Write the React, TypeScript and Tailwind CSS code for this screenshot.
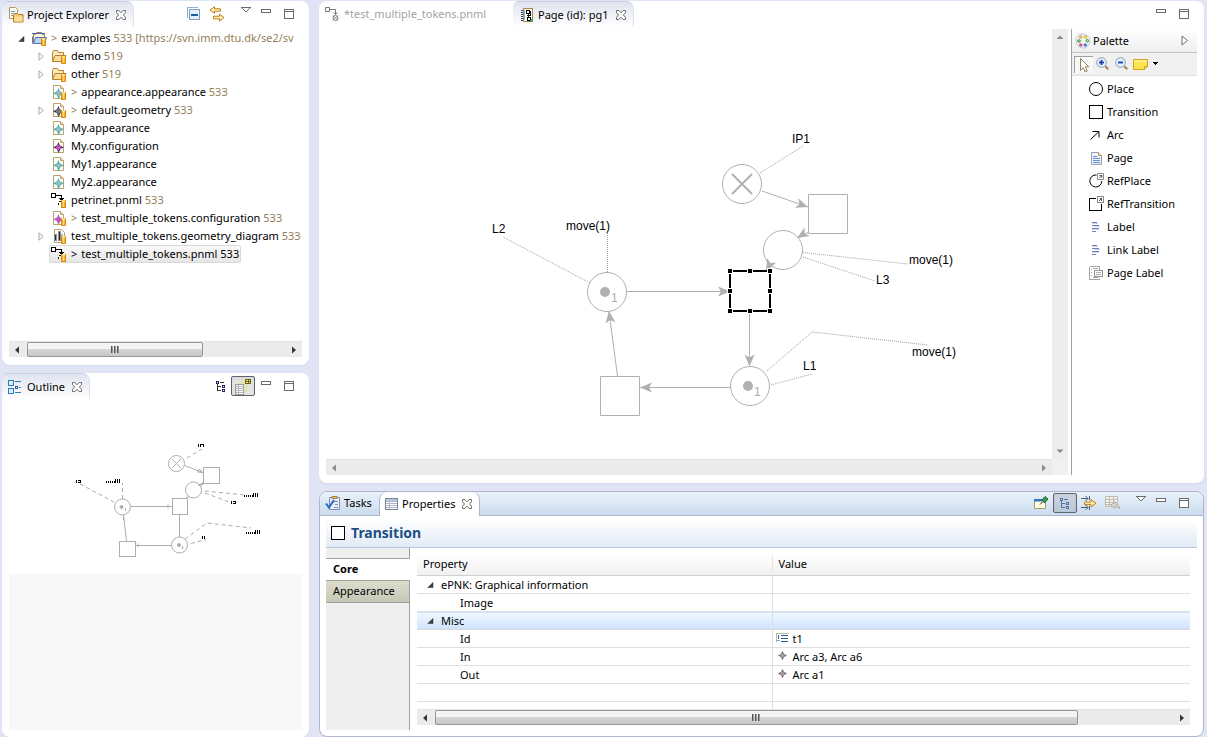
import React from "react";

type IconProps = { children: React.ReactNode; w?: number; h?: number; smooth?: boolean };

function Icon({ children, w = 16, h = 16, smooth = false }: IconProps) {
  return (
    <svg
      width={w}
      height={h}
      viewBox={`0 0 ${w} ${h}`}
      fill="none"
      shapeRendering={smooth ? "auto" : "crispEdges"}
      className="block shrink-0"
      aria-hidden="true"
    >
      {children}
    </svg>
  );
}

/* ---------- window chrome icons ---------- */

const CloseIcon = () => (
  <Icon w={12} h={12} smooth>
    <path
      d="M1.5 1.5h2.4L6 3.8l2.1-2.3h2.4v2.2L8.4 6l2.1 2.3v2.2H8.1L6 8.2l-2.1 2.3H1.5V8.3L3.6 6 1.5 3.7z"
      stroke="#6c6c6c"
      fill="#fff"
    />
  </Icon>
);

const MenuIcon = () => (
  <Icon w={10} h={16}>
    <path d="M0 1h10v1H0zM1 2h1v1H1zM8 2h1v1H8zM2 3h1v1H2zM7 3h1v1H7zM3 4h1v1H3zM6 4h1v1H6zM4 5h2v1H4z" fill="#6b6b6b" />
    <path d="M2 2h6v1H2zM3 3h4v1H3zM4 4h2v1H4z" fill="#fff" />
  </Icon>
);

const MinimizeIcon = () => (
  <Icon w={10} h={16}>
    <path d="M.5 3.5h9v3h-9z" stroke="#6b6b6b" fill="#fff" />
  </Icon>
);

const MaximizeIcon = () => (
  <Icon w={10} h={16}>
    <path d="M.5 3.5h9v9h-9z" stroke="#6b6b6b" fill="#fff" />
    <path d="M0 5h10v1H0z" fill="#6b6b6b" />
  </Icon>
);

/* ---------- explorer icons ---------- */

const ExplorerIcon = () => (
  <Icon smooth>
    <path d="M1.5.5h6l2 2v9h-8z" fill="#fffdf3" stroke="#b39a5a" />
    <path d="M3 4.5h4M3 6.5h2.5M3 8.5h2" stroke="#6f9bc9" />
    <path d="M5.500 8.500l1-2h3l1 1h4.500v7.500h-9.500z" fill="#f5c86e" stroke="#b5792a" />
    <path d="M6.500 9.500h8v5h-8z" fill="#fbdc93" />
  </Icon>
);

const CollapseIcon = () => (
  <Icon w={14} h={14}>
    <path d="M.5 10.500v-10h10" stroke="#8fb0d0" />
    <path d="M2.500 2.500h10v10h-10z" fill="#e4f0fa" stroke="#7c9fc2" />
    <path d="M4 7h7v2H4z" fill="#1d5c9b" />
  </Icon>
);

const LinkIcon = () => (
  <Icon smooth>
    <path d="M5.500.8v2h6v2.400h-6v2L1 4z" fill="#fff0b8" stroke="#b8811f" />
    <path d="M10.500 8.200v2h-6v2.600h6v2.300L15 11.600z" fill="#fff0b8" stroke="#b8811f" />
  </Icon>
);

const Cylinder = () => (
  <>
    <path d="M10.500 8.500h4v7h-4z" fill="#f7b42c" stroke="#d58a12" />
    <path d="M11 8h3v2h-3z" fill="#fde08a" />
    <path d="M12 10h1v5h-1z" fill="#ffd873" />
  </>
);

const ProjectIcon = () => (
  <Icon smooth>
    <path d="M2.500 13.500v-9h2l1-2h5l1 2h2v3" fill="#fdf6dd" stroke="#9c8a5a" />
    <path d="M1 3.500h13" stroke="#4a62b0" />
    <path d="M1.500 6.500v7" stroke="#5b76bd" />
    <path d="M2.500 13.500l2-6h11l-2 6z" fill="#b9d3f4" stroke="#5673b8" />
    <Cylinder />
  </Icon>
);

const FolderIcon = () => (
  <Icon smooth>
    <path d="M1.500 13.500v-9l1-2h4l1 2h5v3" fill="#fbe8bd" stroke="#b9822f" />
    <path d="M1.500 13.500l2.500-6h11l-2.500 6z" fill="#fbdb9a" stroke="#b9822f" />
    <Cylinder />
  </Icon>
);

type FileProps = { tone: string; line: string; versioned?: boolean };

const FileIcon = ({ tone, line, versioned }: FileProps) => (
  <Icon smooth>
    <path d="M2.500 1.500h7l3 3v10h-10z" fill="#fcfdff" stroke="#b9a36b" />
    <path d="M9.500 1.500v3h3" fill="#efdca2" stroke="#b9a36b" />
    <path d="M7.500 4l1.300 3.200L13 9.500l-3.200 1.300L7.500 15l-1.700-4L2 9.500l4-2.300z" fill={line} />
    <path d="M7.500 6.500l3 3-3 3-3-3z" fill={tone} />
    {versioned && <Cylinder />}
  </Icon>
);

const AppearanceFile = ({ versioned = false }) => <FileIcon tone="#a4b5b4" line="#35b9b6" versioned={versioned} />;
const ConfigFile = ({ versioned = false }) => (
  <FileIcon tone="#d04fc8" line={versioned ? "#a387ab" : "#4a3b50"} versioned={versioned} />
);
const GeometryFile = () => <FileIcon tone="#7b7b80" line="#3a3a3e" versioned />;

const PnmlIcon = () => (
  <Icon>
    <path d="M.5 1.500h4v4h-4z" stroke="#000" fill="#fff" />
    <path d="M5 3h5v1H5zM10 3h1v5h-1zM8 6h5v1H8zM9 7h3v1H9zM10 8h1v1h-1z" fill="#000" />
    <path d="M8 9h2v1H8zM7 11h1v2H7z" fill="#222" />
    <Cylinder />
  </Icon>
);

const PnmlGrayIcon = () => (
  <Icon smooth>
    <path d="M.5 1.500h4v4h-4z" stroke="#777" />
    <path d="M5 3.500h5.500V8M8.500 6.500l2 2 2-2" stroke="#777" />
    <path d="M8 9.500l5 5M13 9.500l-5 5" stroke="#999" />
    <circle cx="10.500" cy="12" r="2.500" stroke="#777" />
  </Icon>
);

const DiagramFile = () => (
  <Icon smooth>
    <path d="M3.500 1.500h7l3 3v10h-10z" fill="#fcfdff" stroke="#b9a36b" />
    <path d="M3 6h3v7H3zM7 3h3v10H7z" fill="#8d8f93" />
    <path d="M10 6h2v5h-2z" fill="#b5b7ba" />
    <path d="M4.500 7v5M8.500 4v8" stroke="#2f3033" />
    <Cylinder />
  </Icon>
);

const PageTabIcon = () => (
  <Icon>
    <path d="M4.500 1.500h9v13h-9z" fill="#fff" stroke="#a8873f" />
    <path d="M2 3.500h2M2 5.500h2M2 7.500h2M2 9.500h2M2 11.500h2M2 13.500h2" stroke="#1c4a8c" />
    <path d="M5 3h1v10H5z" fill="#8fb3e0" />
    <path d="M7.500 3.500h3v3h-3zM8.500 10.500h3v3h-3z" stroke="#000" />
    <path d="M9 6h1v5H9zM11 4h1v5h-1zM8 8h4v1H8z" fill="#111" />
    <path d="M10 15l4-5v4z" fill="#3f9a52" />
  </Icon>
);

/* ---------- outline icons ---------- */

const OutlineIcon = () => (
  <Icon>
    <path d="M.5 1.500h5v5h-5zM.5 9.500h5v5h-5z" fill="#d6effb" stroke="#2b7fb8" />
    <path d="M7 2.500h6M7 13.500h6M11 8.500h2" stroke="#2b7fb8" />
    <path d="M7.500 7.500h2v2h-2z" stroke="#22629a" />
  </Icon>
);

const TreeIcon = ({ tone = "#22226a", stem = "#333" }) => (
  <Icon w={12} h={12}>
    <path d="M1 1h3v1H1zM1 2h1v1H1zM3 2h1v1H3zM1 3h3v1H1z" fill={tone} />
    <path d="M5 2h4v1H5zM2 4h1v7H2zM3 6h3v1H3zM3 10h3v1H3z" fill={stem} />
    <path d="M7.500 5.500h2v2h-2zM7.500 9.500h2v2h-2z" stroke={tone} />
  </Icon>
);

const OverviewIcon = () => (
  <Icon w={18} h={17}>
    <path d="M1 6L10 1h6l-3 12-3 4z" fill="#e6e2c0" />
    <path d="M1.500 6.500h8v10h-8z" fill="#fff" stroke="#9b9b9b" />
    <path d="M2 8.500h8M2 10.500h8M2 12.500h8M2 14.500h8M4.500 7v9" stroke="#b5b5b5" />
    <path d="M11.500 1.500h5v4h-5z" fill="#f4e45c" stroke="#6d6320" />
    <path d="M12 3.500h4M14.500 2v4" stroke="#6d6320" />
  </Icon>
);

/* ---------- palette icons ---------- */

const PaletteIcon = () => (
  <Icon smooth>
    <path d="M7.500 1C3.500 1 1 3.600 1 7.300 1 11.500 4 15 8 15s7-3.200 7-7.300S12 1 7.500 1z" fill="#f1f5fb" stroke="#b9cae4" />
    <circle cx="5.800" cy="4" r="1.300" fill="#fbe08a" stroke="#e09a28" />
    <circle cx="10.500" cy="4" r="1.300" fill="#fbf08a" stroke="#d8b018" />
    <circle cx="12.300" cy="7.800" r="1.300" fill="#b5e8a0" stroke="#3a9a35" />
    <circle cx="4" cy="8" r="1.300" fill="#b5e8a0" stroke="#3a9a35" />
    <circle cx="5.800" cy="12" r="1.200" fill="#f5a0a0" stroke="#c83a3a" />
    <circle cx="10.200" cy="12" r="1.200" fill="#a0b8f5" stroke="#2f55c0" />
  </Icon>
);

const CursorIcon = () => (
  <Icon smooth>
    <path d="M4.500 1.500v12l2.700-2.700 2 4.200 2-1-2-4.200h3.600z" fill="#fffdf0" stroke="#8b8468" />
  </Icon>
);

const ZoomIcon = ({ plus = false }) => (
  <Icon smooth>
    <circle cx="6.500" cy="6.500" r="4.800" fill="#e3effc" stroke="#8c9db3" />
    <path d="M4 6.500h5" stroke="#1a3fae" strokeWidth="1.800" />
    {plus && <path d="M6.500 4v5" stroke="#1a3fae" strokeWidth="1.800" />}
    <path d="M10.300 10.300l3 3" stroke="#a5845c" strokeWidth="2" />
  </Icon>
);

const NoteIcon = () => (
  <Icon smooth>
    <path d="M.5 3.500h14v7l-3 3H.5z" fill="#fbe24f" stroke="#d6a21c" />
    <path d="M1 4h13v2H1z" fill="#fdf08e" />
    <path d="M11.500 13.500v-3h3z" fill="#fff7c2" stroke="#d6a21c" />
  </Icon>
);

const PlaceIcon = () => (
  <Icon smooth>
    <circle cx="8" cy="8" r="6.500" stroke="#000" fill="#fff" />
  </Icon>
);
const TransitionIcon = () => (
  <Icon>
    <path d="M1.500 1.500h13v13h-13z" stroke="#000" fill="#fff" />
  </Icon>
);
const ArcIcon = () => (
  <Icon smooth>
    <path d="M2.500 12.500l8.500-8M4.500 4.500h6.500v6" stroke="#000" />
  </Icon>
);
const PageIcon = () => (
  <Icon smooth>
    <path d="M3.500 2.500h7l3 3v9h-10z" fill="#eaf2fc" stroke="#9a9fb0" />
    <path d="M10.500 2.500v3h3" fill="#f2dca0" stroke="#c29b4a" />
    <path d="M5 6.500h4M5 8.500h7M5 10.500h7M5 12.500h7" stroke="#6a8fd0" />
  </Icon>
);
const RefBadge = () => (
  <>
    <path d="M9.500.5h6v6h-6z" fill="#fff" stroke="#8a8a8a" />
    <path d="M11.500 4.800l2.200-2.200M11.500 2.500h2.300v2.300" stroke="#555" />
  </>
);
const RefPlaceIcon = () => (
  <Icon smooth>
    <path d="M8.500 2A6 6 0 1 0 13.800 8" stroke="#000" />
    <RefBadge />
  </Icon>
);
const RefTransitionIcon = () => (
  <Icon>
    <path d="M8 2.500H1.500v12h12V8" stroke="#000" />
    <RefBadge />
  </Icon>
);
const LabelIcon = () => (
  <Icon>
    <path d="M4 3.500h5M4 6.500h7M4 9.500h7M4 12.500h4" stroke="#6b82b5" />
    <path d="M4 4.500h6M6 7.500h6M4 10.500h7" stroke="#d0d8e8" />
  </Icon>
);
const PageLabelIcon = () => (
  <Icon>
    <path d="M1.500 1.500h10v3M1.500 1.500v13h10v-2" stroke="#a5a5a5" />
    <path d="M3 4.500h1M3 7.500h1M3 10.500h1M5 3.500h5M5 12.500h5" stroke="#a5a5a5" />
    <path d="M6.500 5.500h8v6h-8z" fill="#fff" stroke="#939393" />
    <path d="M8 7.500h5M8 9.500h5" stroke="#b0b0b0" />
  </Icon>
);

/* ---------- property view icons ---------- */

const TasksIcon = () => (
  <Icon smooth>
    <path d="M4.500 2.500h10v12h-10z" fill="#e8eef8" stroke="#7c8fb0" />
    <path d="M7 1.500h5v2H7z" fill="#e8c878" stroke="#a5803a" />
    <path d="M9 6.500h4M10 9.500h3M9 12.500h4" stroke="#7d90b5" />
    <path d="M1 8.500l3 4L9 5" stroke="#1f6bbf" strokeWidth="2" />
  </Icon>
);
const PropertiesIcon = () => (
  <Icon w={13} h={12}>
    <path d="M.5.500h12v11H.5z" fill="#fff" stroke="#7d8398" />
    <path d="M1 1h11v2H1z" fill="#b7c4e0" />
    <path d="M1 3.500h11M1 5.500h11M1 7.500h11M1 9.500h11M4.500 3v8" stroke="#aeb6c8" />
  </Icon>
);
const PinIcon = () => (
  <Icon smooth>
    <path d="M1.500 4.500h11v9h-11z" fill="#fdfbe4" stroke="#a89a60" />
    <path d="M1 4h8v2.500H1z" fill="#2f78c4" />
    <path d="M7 9.500l3-3" stroke="#333" />
    <path d="M9 5l3-3.500 3 2.500-3.500 4z" fill="#3c9a4a" stroke="#1e6a2c" />
  </Icon>
);
const AdvancedIcon = () => (
  <Icon smooth>
    <path d="M0 3.500h7M4.500 1l2.500 2.500L4.500 6M0 12.500h7M4.500 10l2.500 2.500L4.500 15M8.500 1v4M8.500 11v4" stroke="#4d6076" />
    <path d="M3.500 7h6.500V4.500L15 8.200 10 12V9.500H3.500z" fill="#fde6a0" stroke="#c08420" />
  </Icon>
);
const RestoreIcon = () => (
  <Icon w={15} h={14} smooth>
    <path d="M.5.500h12v10H.5z" fill="#f3f3f0" stroke="#bdbbb0" />
    <path d="M1 3.500h11M1 6.500h11M1 8.500h6M4.500 1v9M8.500 1v5" stroke="#bdbbb0" />
    <path d="M6 9l4-3.500V8c3 0 4.500 1.500 4.500 5-1-2-2-2.500-4.500-2.500v2z" fill="#dcdad2" stroke="#b0aea5" />
  </Icon>
);
const TextValueIcon = () => (
  <Icon w={13} h={12}>
    <path d="M.5 8.500V.500h12" stroke="#b9bda0" />
    <path d="M0 7.500h4" stroke="#7fa5c8" />
    <path d="M2 2h1v4H2zM5 2h7v1H5zM5 5h7v1H5zM5 8h7v1H5z" fill="#2d5f94" />
  </Icon>
);
const ReferenceIcon = () => (
  <Icon w={9} h={11} smooth>
    <path d="M4.500 0l1.500 3 3 1.500L6 6 4.500 9 3 6 0 4.500 3 3z" fill="#6a3f50" />
    <path d="M4.500 1.500l3 3-3 3-3-3z" fill="#a19c9c" />
  </Icon>
);

const Caret = ({ open = false }) => (
  <Icon w={8} h={9} smooth>
    {open ? (
      <path d="M7 2.500v5H1.800z" fill="#404040" stroke="#262626" strokeWidth=".5" />
    ) : (
      <path d="M2 .8v7.400L6.200 4.500z" fill="#fff" stroke="#a5a5a5" />
    )}
  </Icon>
);

/* ---------- shared controls ---------- */

function ToolButton({ label, children, pressed = false }: { label: string; children: React.ReactNode; pressed?: boolean }) {
  return (
    <button
      type="button"
      aria-label={label}
      aria-pressed={pressed || undefined}
      className={
        pressed
          ? "flex h-5 w-6 items-center justify-center rounded-xs border border-[#5d6470] bg-[#0000001a] inset-shadow-sm"
          : "flex h-5 items-center justify-center"
      }
    >
      {children}
    </button>
  );
}

function WindowButtons({ menu = false }: { menu?: boolean }) {
  return (
    <>
      {menu && (
        <ToolButton label="View menu">
          <span className="mr-2.5">
            <MenuIcon />
          </span>
        </ToolButton>
      )}
      <ToolButton label="Minimize">
        <span className="mr-[13px]">
          <MinimizeIcon />
        </span>
      </ToolButton>
      <ToolButton label="Maximize">
        <MaximizeIcon />
      </ToolButton>
    </>
  );
}

const Arrow = ({ d, tone }: { d: string; tone: string }) => (
  <svg width="16" height="16" viewBox="0 0 16 16" className="block shrink-0" aria-hidden="true">
    <path d={d} fill={tone} />
  </svg>
);

const LEFT = "M10 4.500v7L6 8z";
const RIGHT = "M6 4.500v7L10 8z";
const UP = "M4.500 10h7L8 6.500z";
const DOWN = "M4.500 6.500h7L8 10z";

function HScroll({ thumb, tone = "#333" }: { thumb?: string; tone?: string }) {
  return (
    <div className="flex h-4 w-full shrink-0 border-t border-[#e3e3e3] bg-[#ebebeb]">
      <Arrow d={LEFT} tone={tone} />
      <div className="flex min-w-0 flex-1 pl-0.5">
        {thumb && (
          <div
            className={`flex h-[15px] items-center justify-center gap-px rounded-[2px] border border-[#979797] bg-linear-to-b from-[#f4f4f4] from-45% via-[#d5d6d7] via-50% to-[#c6c7c8] ${thumb}`}
          >
            <i className="h-[7px] w-0.5 border-l border-[#555] bg-[#999]" />
            <i className="h-[7px] w-0.5 border-l border-[#555] bg-[#999]" />
            <i className="h-[7px] w-0.5 border-l border-[#555] bg-[#999]" />
          </div>
        )}
      </div>
      <Arrow d={RIGHT} tone={tone} />
    </div>
  );
}

function Tab({ icon, children }: { icon: React.ReactNode; children: React.ReactNode }) {
  return (
    <div className="flex h-[26px] items-center rounded-tl-md rounded-tr-lg border-t border-r border-t-[#c9cfe0] border-r-[#dfe3ee] bg-linear-to-b from-[#e0e4f0] to-white px-1.5">
      {icon}
      <span className="mr-1.5 ml-[3px]">{children}</span>
      <button type="button" aria-label="Close">
        <CloseIcon />
      </button>
    </div>
  );
}

/* ---------- project explorer ---------- */

type Item = {
  name: string;
  rev?: string;
  icon: React.ReactNode;
  caret?: boolean;
  dirty?: boolean;
  selected?: boolean;
};

const items: Item[] = [
  { name: "demo", rev: "519", icon: <FolderIcon />, caret: true },
  { name: "other", rev: "519", icon: <FolderIcon />, caret: true },
  { name: "appearance.appearance", rev: "533", icon: <AppearanceFile versioned />, dirty: true },
  { name: "default.geometry", rev: "533", icon: <GeometryFile />, caret: true, dirty: true },
  { name: "My.appearance", icon: <AppearanceFile /> },
  { name: "My.configuration", icon: <ConfigFile /> },
  { name: "My1.appearance", icon: <AppearanceFile /> },
  { name: "My2.appearance", icon: <AppearanceFile /> },
  { name: "petrinet.pnml", rev: "533", icon: <PnmlIcon /> },
  { name: "test_multiple_tokens.configuration", rev: "533", icon: <ConfigFile versioned />, dirty: true },
  { name: "test_multiple_tokens.geometry_diagram", rev: "533", icon: <DiagramFile />, caret: true },
  { name: "test_multiple_tokens.pnml", rev: "533", icon: <PnmlIcon />, dirty: true, selected: true },
];

function TreeRow({ item }: { item: Item }) {
  const muted = item.selected ? "text-black" : "text-[#94815a]";
  return (
    <li className="flex h-[18px] items-center pl-7">
      <span className="w-3.5">
        {item.caret && (
          <button type="button" aria-label={`Expand ${item.name}`} className="block">
            <Caret />
          </button>
        )}
      </span>
      <span
        className={
          item.selected
            ? "-ml-0.5 flex h-[18px] items-center rounded-xs border border-[#d9d9d9] bg-linear-to-b from-[#fafafa] to-[#e6e6e6] px-px"
            : "flex h-[18px] items-center"
        }
      >
        {item.icon}
        <span className="ml-1 whitespace-pre">
          {item.dirty && <span className={`mr-1 ${muted}`}>&gt;</span>}
          {item.name}
          {item.rev && <span className={muted}> {item.rev}</span>}
        </span>
      </span>
    </li>
  );
}

function ProjectExplorer() {
  return (
    <section className="flex flex-1 flex-col rounded-lg bg-white shadow-xs">
      <header className="flex h-7 items-start justify-between pr-[15px]">
        <Tab icon={<ExplorerIcon />}>Project Explorer</Tab>
        <div className="flex items-center pt-[3px]">
          <ToolButton label="Collapse all">
            <span className="mr-2">
              <CollapseIcon />
            </span>
          </ToolButton>
          <ToolButton label="Link with editor">
            <span className="mr-4">
              <LinkIcon />
            </span>
          </ToolButton>
          <WindowButtons menu />
        </div>
      </header>
      <ul className="flex-1 overflow-hidden pl-[7px]">
        <li className="mr-[7px] flex h-[18px] items-center overflow-hidden pl-2">
          <button type="button" aria-label="Collapse examples" className="mr-1.5">
            <Caret open />
          </button>
          <ProjectIcon />
          <span className="ml-1 whitespace-pre">
            <span className="mr-1 text-[#94815a]">&gt;</span>examples
            <span className="text-[#94815a]"> 533 [https://svn.imm.dtu.dk/se2/sv</span>
          </span>
        </li>
        {items.map((item) => (
          <TreeRow key={item.name} item={item} />
        ))}
      </ul>
      <div className="px-[7px] pb-2">
        <HScroll thumb="w-[68%]" />
      </div>
    </section>
  );
}

/* ---------- outline ---------- */

function Outline() {
  return (
    <section className="flex flex-1 flex-col rounded-lg bg-white shadow-xs">
      <header className="flex h-7 items-start justify-between pr-[15px]">
        <Tab icon={<OutlineIcon />}>Outline</Tab>
        <div className="flex items-center gap-1 pt-[3px]">
          <ToolButton label="Outline">
            <TreeIcon />
          </ToolButton>
          <ToolButton label="Overview" pressed>
            <OverviewIcon />
          </ToolButton>
          <span className="ml-0.5 flex">
            <WindowButtons />
          </span>
        </div>
      </header>
      <div className="mx-[7px] mb-[7px] flex flex-1 flex-col bg-[#f8f8f8]">
        <svg width="293" height="173" viewBox="9 401 293 173" className="block bg-white" fill="none" aria-label="Diagram overview">
          <g stroke="#adadad" shapeRendering="crispEdges">
            <path d="M203.500 467.500h16v16h-16zM172.500 498.500h15v16h-15zM119.500 541.500h16v15h-16z" />
            <path d="M131 506.500h41M179.500 515v22M172 545.500h-36M168 506.500h4M179.500 534v3" />
          </g>
          <g stroke="#adadad">
            <circle cx="176.500" cy="463.500" r="8" />
            <circle cx="193.500" cy="490" r="8" />
            <circle cx="122.500" cy="507" r="8" />
            <circle cx="179.500" cy="545" r="8" />
            <path d="M172 459l9 9M181 459l-9 9M184.500 465.500l18.500 7M203 483l-5 2.500M186 498l3-2M126.500 541l-3-26" />
            <path d="M202.500 472.500l-5-.5 2-3zM199 485.500l4-3v2zM168 504.500v4M123.500 517v3M138 543.500v4" />
            <path
              d="M187 458l15-9M80 484l34 18M122.500 499v-16M205 491l40 4M205 493l24 9M185 539l22-16 44 5M191 543.500l15-4"
              strokeDasharray="4 3"
            />
            <circle cx="121.500" cy="507" r="1.500" fill="#adadad" />
            <circle cx="179" cy="545" r="1.500" fill="#adadad" />
            <path d="M125.500 508v3M182.500 546v3" />
          </g>
          <g stroke="#000" shapeRendering="crispEdges">
            <path d="M106 481.500h9M244 495.500h9M246 532.500h9" strokeWidth="2" strokeDasharray="1 1" />
            <path d="M115.500 479v4M117.500 479v4M119.500 479v4M253.500 493v4M255.500 493v4M257.500 493v4M255.500 530v4M257.500 530v4M259.500 530v4" />
            <path d="M198.500 444v3M200.500 444v3M203.500 444v3M76.500 480v3M202.500 536v3M204.500 536v3M231.500 501v3" />
            <path d="M200 444.500h3M78 480.500h2M78 482.500h2M80.500 480v3M233 501.500h2M233 503.500h2M235.500 501v3" />
          </g>
        </svg>
      </div>
    </section>
  );
}

/* ---------- editor ---------- */

const HEAD = "M0 0L-12-5-9 0-12 5z";

function Head({ x, y, angle }: { x: number; y: number; angle: number }) {
  return <path d={HEAD} transform={`translate(${x} ${y}) rotate(${angle})`} fill="#b0b0b0" stroke="none" />;
}

const labels = [
  { x: 792, y: 143, text: "IP1" },
  { x: 492, y: 233, text: "L2" },
  { x: 566, y: 230, text: "move(1)" },
  { x: 909, y: 264, text: "move(1)" },
  { x: 876, y: 284, text: "L3" },
  { x: 912, y: 356, text: "move(1)" },
  { x: 803, y: 370, text: "L1" },
];

const handles = [
  [730, 271], [750, 271], [770, 271],
  [730, 291], [770, 291],
  [730, 311], [750, 311], [770, 311],
];

function Canvas() {
  return (
    <svg
      width="727"
      height="429"
      viewBox="326 29 727 429"
      fill="none"
      className="block"
      fontFamily="'Liberation Sans', Arial, sans-serif"
      fontSize="12"
      aria-label="Petri net diagram"
    >
      <g stroke="#a0a0a0" strokeDasharray="1 1">
        <path d="M760 173l43-27M803 252.500l105 11.500M803 257l72 24M767 371l45-39 116 13M771 385l41-11M607.500 272v-40M590 283l-87-46" />
      </g>
      <g stroke="#b0b0b0">
        <path d="M762 191l46 16M809 232l-12 6M627 291.500h102M749.500 312v53M730 387.500h-90M617.500 376L609 312M768 270l6-6" />
        <circle cx="742" cy="184" r="19.500" fill="#fff" />
        <circle cx="783" cy="250" r="19.500" fill="#fff" />
        <circle cx="607" cy="292" r="19.500" fill="#fff" />
        <circle cx="750" cy="386" r="19.500" fill="#fff" />
        <path d="M808.500 194.500h39v39h-39zM600.500 376.500h39v39h-39z" fill="#fff" />
        <path d="M732 174l20 20M752 174l-20 20" strokeWidth="2" />
      </g>
      <Head x={808} y={207} angle={19} />
      <Head x={797} y={238} angle={148} />
      <Head x={766} y={271} angle={118} />
      <Head x={730} y={291.5} angle={0} />
      <Head x={749.5} y={366.500} angle={90} />
      <Head x={640} y={387.500} angle={180} />
      <Head x={609} y={311} angle={-97} />
      <circle cx="605" cy="292" r="5" fill="#b0b0b0" />
      <circle cx="748" cy="386" r="5" fill="#b0b0b0" />
      <g fill="#b0a8a8">
        <text x="611" y="302">1</text>
        <text x="754" y="396">1</text>
      </g>
      <path d="M730 271h40v40h-40z" fill="#fff" stroke="#000" strokeWidth="2" shapeRendering="crispEdges" />
      {handles.map(([x, y]) => (
        <rect key={`${x}-${y}`} x={x - 2.5} y={y - 2.5} width="5" height="5" fill="#000" stroke="#fff" />
      ))}
      {labels.map((l) => (
        <text key={`${l.x}-${l.y}`} x={l.x} y={l.y} fill="#000">
          {l.text}
        </text>
      ))}
    </svg>
  );
}

const tools = [
  { name: "Place", icon: <PlaceIcon /> },
  { name: "Transition", icon: <TransitionIcon /> },
  { name: "Arc", icon: <ArcIcon /> },
  { name: "Page", icon: <PageIcon /> },
  { name: "RefPlace", icon: <RefPlaceIcon /> },
  { name: "RefTransition", icon: <RefTransitionIcon /> },
  { name: "Label", icon: <LabelIcon /> },
  { name: "Link Label", icon: <LabelIcon /> },
  { name: "Page Label", icon: <PageLabelIcon /> },
];

function Palette() {
  return (
    <aside className="ml-[3px] w-[126px] shrink-0 border-l border-[#a0a0a0]">
      <div className="flex h-6 items-center border-b border-[#c4c4c4] bg-linear-to-b from-white to-[#eeeeee] pr-2 pl-[3px]">
        <PaletteIcon />
        <span className="ml-0.5 flex-1">Palette</span>
        <button type="button" aria-label="Hide palette">
          <Icon w={8} h={11} smooth>
            <path d="M1 1v9l5.500-4.500z" fill="#fff" stroke="#6b6b6b" />
          </Icon>
        </button>
      </div>
      <div className="flex h-[23px] items-center border-b border-[#e0e0e0] bg-[#f0f0f0] pl-0.5">
        <button type="button" aria-label="Select" aria-pressed="true" className="border-t border-l border-[#a0a0a0] bg-[#f8f8f8] px-px">
          <CursorIcon />
        </button>
        <button type="button" aria-label="Zoom in" className="ml-0.5">
          <ZoomIcon plus />
        </button>
        <button type="button" aria-label="Zoom out" className="ml-[3px]">
          <ZoomIcon />
        </button>
        <button type="button" aria-label="Note" className="ml-[3px] flex items-center">
          <NoteIcon />
          <span className="ml-1">
            <Icon w={6} h={4}>
              <path d="M0 0h5v1H0zM1 1h3v1H1zM2 2h1v1H2z" fill="#000" />
            </Icon>
          </span>
        </button>
      </div>
      <ul className="pt-px">
        {tools.map((t) => (
          <li key={t.name}>
            <button type="button" className="flex h-[23px] w-full items-center gap-[3px] pl-4 text-left">
              {t.icon}
              {t.name}
            </button>
          </li>
        ))}
      </ul>
    </aside>
  );
}

function Editor() {
  return (
    <section className="flex flex-1 flex-col rounded-lg bg-white shadow-xs">
      <header className="flex h-7 shrink-0 items-start pr-[15px]">
        <div className="flex h-[26px] w-[194px] items-center gap-[3px] pl-1.5 text-[#a3a3a3]">
          <PnmlGrayIcon />
          *test_multiple_tokens.pnml
        </div>
        <Tab icon={<PageTabIcon />}>Page (id): pg1</Tab>
        <div className="ml-auto flex items-center pt-[3px]">
          <WindowButtons />
        </div>
      </header>
      <div className="flex flex-1 px-[7px] pb-2">
        <div className="flex min-w-0 flex-1 flex-col">
          <div className="flex flex-1">
            <div className="min-w-0 flex-1 overflow-hidden">
              <Canvas />
            </div>
            <div className="flex w-4 flex-col justify-between bg-[#ededed]">
              <Arrow d={UP} tone="#8a8a8a" />
              <Arrow d={DOWN} tone="#8a8a8a" />
            </div>
          </div>
          <div className="flex bg-[#f0f0f0] pr-4">
            <HScroll tone="#8a8a8a" />
          </div>
        </div>
        <Palette />
      </div>
    </section>
  );
}

/* ---------- properties ---------- */

type PropRow = { label: string; group?: boolean; selected?: boolean; icon?: React.ReactNode; value?: string };

const rows: PropRow[] = [
  { label: "ePNK: Graphical information", group: true },
  { label: "Image" },
  { label: "Misc", group: true, selected: true },
  { label: "Id", icon: <TextValueIcon />, value: "t1" },
  { label: "In", icon: <ReferenceIcon />, value: "Arc a3, Arc a6" },
  { label: "Out", icon: <ReferenceIcon />, value: "Arc a1" },
  { label: "" },
];

function PropertyTable() {
  return (
    <table className="w-full table-fixed border-collapse">
      <thead>
        <tr className="h-[21px] border-b border-[#d0d0d0] bg-linear-to-b from-white to-[#f0f0f0]">
          <th className="w-[355px] border-r border-[#e5e5e5] pt-0 pb-0.5 pl-1.5 text-left font-normal">Property</th>
          <th className="pt-0 pb-0.5 pl-1.5 text-left font-normal">Value</th>
        </tr>
      </thead>
      <tbody>
        {rows.map((r, i) => (
          <tr
            key={i}
            className={
              r.selected
                ? "h-[18px] border-t border-b border-t-[#84acdd] border-b-[#d9d9d9] bg-linear-to-b from-[#f0f7ff] to-[#cfe4fd]"
                : "h-[18px] border-b border-[#dfdfdf]"
            }
          >
            <td className="border-r border-[#dfdfdf] p-0">
              <div className={r.group ? "flex h-[17px] items-center pl-[9px]" : "flex h-[17px] items-center pl-[43px]"}>
                {r.group && (
                  <button type="button" aria-label={`Collapse ${r.label}`} className="mr-[7px]">
                    <Caret open />
                  </button>
                )}
                {r.label}
              </div>
            </td>
            <td className="p-0">
              <div className="flex h-[17px] items-center">
                {r.value && (
                  <>
                    <span className="mr-px flex w-[19px] justify-center">{r.icon}</span>
                    {r.value}
                  </>
                )}
              </div>
            </td>
          </tr>
        ))}
      </tbody>
    </table>
  );
}

function Properties() {
  return (
    <section className="flex flex-col rounded-lg border border-[#adb6cf] bg-white">
      <header className="flex h-6 items-center rounded-t-lg border-b border-[#adb6cf] bg-linear-to-b from-[#e9f2fb] to-[#cbdcee]">
        <button type="button" className="flex w-[59px] items-center gap-[3px] pl-[5px]">
          <TasksIcon />
          Tasks
        </button>
        <div className="-mb-px flex h-6 items-center rounded-t-lg border-r border-l border-[#adb6cf] bg-white pr-1.5 pl-[5px]">
          <PropertiesIcon />
          <span className="mr-1.5 ml-1">Properties</span>
          <button type="button" aria-label="Close">
            <CloseIcon />
          </button>
        </div>
        <div className="ml-auto flex items-center pr-3.5">
          <ToolButton label="Pin to selection">
            <PinIcon />
          </ToolButton>
          <span className="mx-1">
            <ToolButton label="Show categories" pressed>
              <TreeIcon tone="#5674ae" stem="#5674ae" />
            </ToolButton>
          </span>
          <ToolButton label="Show advanced properties">
            <AdvancedIcon />
          </ToolButton>
          <span className="mr-4 ml-2">
            <ToolButton label="Restore default value">
              <RestoreIcon />
            </ToolButton>
          </span>
          <WindowButtons menu />
        </div>
      </header>
      <div className="mx-1.5 mt-1 mb-1.5">
        <h2 className="flex h-7 items-center gap-[5px] border-b border-[#b4c8e0] bg-linear-to-b from-white to-[#e2eaf5] pl-1 text-sm font-bold text-[#1d4f85]">
          <TransitionIcon />
          Transition
        </h2>
        <div className="flex">
          <div role="tablist" className="flex w-[84px] shrink-0 flex-col border-r border-[#a0a0a0] bg-[#efefef]">
            <div className="h-[11px] border-b border-[#a0a0a0]" />
            <button type="button" role="tab" aria-selected="true" className="-mr-px h-[21px] bg-white pl-[7px] text-left font-bold">
              Core
            </button>
            <button
              type="button"
              role="tab"
              aria-selected="false"
              className="h-[23px] border-t border-b border-[#a0a0a0] bg-linear-to-b from-[#dcdccc] to-[#c6c8b6] pl-[7px] text-left"
            >
              Appearance
            </button>
          </div>
          <div className="min-w-0 flex-1 pt-[7px] pr-[7px] pb-[5px] pl-[7px]">
            <PropertyTable />
            <div className="h-[7px]">
              <div className="ml-[355px] h-full border-l border-[#dfdfdf]" />
            </div>
            <HScroll thumb="w-[87%]" />
          </div>
        </div>
      </div>
    </section>
  );
}

export default function App() {
  return (
    <div className="flex min-h-screen gap-2.5 bg-[#e0e4f4] pt-px pr-[3px] pl-0.5 font-['Noto_Sans','Open_Sans',sans-serif] text-[11px] leading-4 text-black">
      <div className="flex w-[307px] shrink-0 flex-col gap-2">
        <ProjectExplorer />
        <Outline />
      </div>
      <main className="flex min-w-0 flex-1 flex-col gap-2">
        <Editor />
        <Properties />
      </main>
    </div>
  );
}
